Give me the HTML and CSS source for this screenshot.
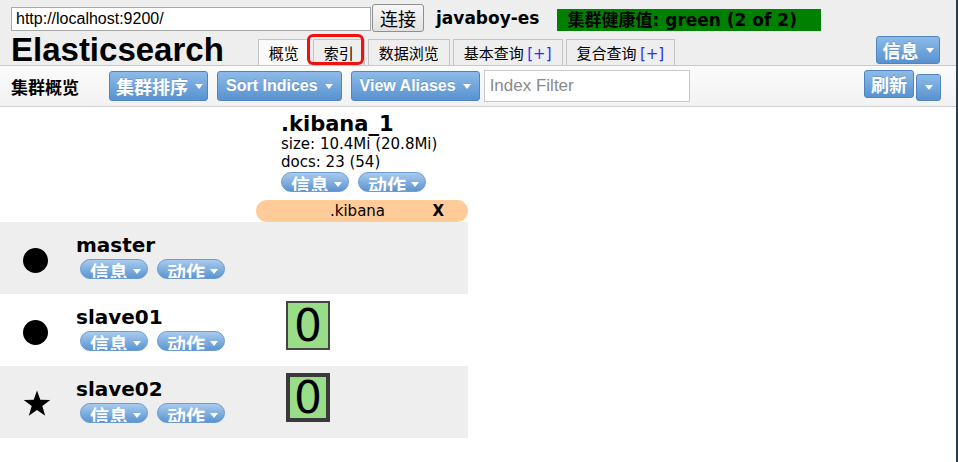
FILE: index.html
```html
<!DOCTYPE html>
<html lang="zh">
<head>
<meta charset="utf-8">
<title>Elasticsearch Head</title>
<link rel="stylesheet" href="styles.css">
</head>
<body>
<div class="page">
  <header class="head">
    <div class="conn">
      <input class="url" type="text" value="http://localhost:9200/">
      <button class="connect">连接</button>
      <span class="cluster-name">javaboy-es</span>
      <span class="health">集群健康值: green (2 of 2)</span>
    </div>
    <div class="nav">
      <h1 class="brand">Elasticsearch</h1>
      <ul class="tabs">
        <li class="tab active">概览</li>
        <li class="tab marked">索引</li>
        <li class="tab">数据浏览</li>
        <li class="tab">基本查询 <span class="plus">[+]</span></li>
        <li class="tab">复合查询 <span class="plus">[+]</span></li>
      </ul>
      <button class="btn btn-info">信息<span class="caret"></span></button>
    </div>
  </header>

  <div class="toolbar">
    <span class="tb-title">集群概览</span>
    <button class="btn btn-tb btn-cjk">集群排序<span class="caret"></span></button>
    <button class="btn btn-tb">Sort Indices<span class="caret"></span></button>
    <button class="btn btn-tb">View Aliases<span class="caret"></span></button>
    <input class="filter" type="text" placeholder="Index Filter">
    <div class="refresh">
      <button class="btn btn-refresh">刷新</button>
      <button class="btn btn-drop"><span class="caret"></span></button>
    </div>
  </div>

  <div class="cluster">
    <div class="row head-row">
      <div class="cell"></div>
      <div class="cell index">
        <div class="index-name">.kibana_1</div>
        <div class="index-meta">size: 10.4Mi (20.8Mi)</div>
        <div class="index-meta">docs: 23 (54)</div>
        <div class="pills">
          <span class="pill">信息<span class="caret"></span></span>
          <span class="pill">动作<span class="caret"></span></span>
        </div>
      </div>
    </div>
    <div class="row alias-row">
      <div class="cell"></div>
      <div class="cell alias"><span class="alias-name">.kibana</span><span class="alias-x">X</span></div>
    </div>

    <div class="row node shade">
      <div class="cell node-cell">
        <span class="node-icon dot"></span>
        <div class="node-info">
          <div class="node-name">master</div>
          <div class="pills">
            <span class="pill">信息<span class="caret"></span></span>
            <span class="pill">动作<span class="caret"></span></span>
          </div>
        </div>
      </div>
      <div class="cell shards"></div>
    </div>

    <div class="row node">
      <div class="cell node-cell">
        <span class="node-icon dot"></span>
        <div class="node-info">
          <div class="node-name">slave01</div>
          <div class="pills">
            <span class="pill">信息<span class="caret"></span></span>
            <span class="pill">动作<span class="caret"></span></span>
          </div>
        </div>
      </div>
      <div class="cell shards"><span class="shard">0</span></div>
    </div>

    <div class="row node shade">
      <div class="cell node-cell">
        <svg class="node-icon star" viewBox="0 0 28 27" width="28" height="27"><polygon points="14,0.5 17.3,9.8 27.3,10 19.3,16.1 22.2,25.8 14,20.1 5.8,25.8 8.7,16.1 0.7,10 10.7,9.8" fill="#000"/></svg>
        <div class="node-info">
          <div class="node-name">slave02</div>
          <div class="pills">
            <span class="pill">信息<span class="caret"></span></span>
            <span class="pill">动作<span class="caret"></span></span>
          </div>
        </div>
      </div>
      <div class="cell shards"><span class="shard primary">0</span></div>
    </div>
  </div>
</div>
</body>
</html>
```

FILE: styles.css
```css
html, body {
  margin: 0;
  padding: 0;
  background: #fff;
}

.page {
  width: 956px;
  height: 462px;
  border-right: 2px solid #243f52;
  background: #fff;
  font-family: "DejaVu Sans", "Noto Sans CJK SC", sans-serif;
  color: #000;
  overflow: hidden;
}

/* ---------- header ---------- */
.head {
  background: #eeeeee;
  padding: 4px 0 0 11px;
  border-bottom: 1px solid #c8c8c8;
}

.conn {
  display: flex;
  align-items: center;
  height: 28px;
}

.url {
  box-sizing: border-box;
  width: 360px;
  height: 24px;
  margin: 2px 0 0 0;
  padding: 0 4px;
  border: 1px solid #a9a9a9;
  background: #fff;
  font: 16px "Liberation Sans", "Noto Sans CJK SC", sans-serif;
  color: #000;
}

.connect {
  box-sizing: border-box;
  width: 52px;
  height: 28px;
  margin-left: 1px;
  padding: 0;
  border: 1px solid #8f8f8f;
  border-radius: 3px;
  background: linear-gradient(#f7f7f7, #e2e2e2);
  font: 18px "Noto Sans CJK SC", sans-serif;
  color: #000;
}

.cluster-name {
  margin-left: 12px;
  font: bold 17px "DejaVu Sans", sans-serif;
}

.health {
  box-sizing: border-box;
  width: 264px;
  height: 22px;
  margin: 3px 0 0 17px;
  padding-left: 11px;
  background: #008000;
  font: bold 17px/22px "DejaVu Sans", "Noto Sans CJK SC", sans-serif;
  color: #000;
}

.nav {
  display: flex;
  align-items: flex-end;
  height: 33px;
}

.brand {
  margin: 0;
  font: bold 33px/30px "Liberation Sans", sans-serif;
  color: #000;
}

.tabs {
  display: flex;
  margin: 0 0 0 34px;
  padding: 0;
  list-style: none;
}

.tab {
  position: relative;
  height: 25px;
  margin-right: 3px;
  padding: 0 10px;
  border: 1px solid #c4c4c4;
  border-bottom: none;
  background: #eeeeee;
  font: 15px/25px "Noto Sans CJK SC", sans-serif;
  color: #000;
  white-space: nowrap;
}

.tab.active {
  background: #fafafa;
}

.tab.marked::after {
  content: "";
  position: absolute;
  left: -7px;
  top: -6px;
  width: 51px;
  height: 25px;
  border: 3px solid #f01010;
  border-radius: 6px;
}

.plus {
  color: #2f2ff0;
  font-family: "DejaVu Sans", sans-serif;
}

/* ---------- buttons ---------- */
.btn {
  display: inline-flex;
  align-items: center;
  justify-content: center;
  box-sizing: border-box;
  padding: 0;
  border: 1px solid #4f83c2;
  border-radius: 3px;
  background: linear-gradient(#8dbbe8, #5892d0);
  color: #fff;
  font: bold 17px "Liberation Sans", "Noto Sans CJK SC", sans-serif;
  text-shadow: 0 -1px 0 rgba(0, 0, 0, 0.15);
}

.caret {
  display: inline-block;
  width: 0;
  height: 0;
  margin-left: 7px;
  border-left: 4px solid transparent;
  border-right: 4px solid transparent;
  border-top: 5px solid #fff;
}

.btn-info {
  align-self: flex-start;
  width: 64px;
  height: 28px;
  margin: 4px 16px 0 auto;
  font-size: 18px;
}

/* ---------- toolbar ---------- */
.toolbar {
  display: flex;
  align-items: center;
  height: 40px;
  padding-left: 11px;
  border-bottom: 1px solid #cfcfcf;
  background: linear-gradient(#fbfbfb, #f2f2f2);
}

.tb-title {
  margin-right: 30px;
  font: bold 17px "Noto Sans CJK SC", sans-serif;
}

.btn-tb {
  height: 30px;
  margin-right: 9px;
  padding: 0 8px;
  font-size: 16px;
}

.btn-tb.btn-cjk {
  padding: 0 4px 0 6px;
  font-size: 18px;
}

.filter {
  box-sizing: border-box;
  width: 206px;
  height: 32px;
  margin-left: -5px;
  padding: 0 5px;
  border: 1px solid #c9c9c9;
  background: #fff;
  font: 17px "Liberation Sans", sans-serif;
}

.filter::placeholder {
  color: #8a8a8a;
}

.refresh {
  display: flex;
  align-items: center;
  margin: 0 15px 0 auto;
}

.btn-refresh {
  width: 50px;
  height: 28px;
  margin-top: -4px;
  font-size: 18px;
}

.btn-drop {
  width: 25px;
  height: 27px;
  margin: 3px 0 0 2px;
}

.btn-drop .caret {
  margin-left: 0;
}

/* ---------- cluster overview ---------- */
.cluster {
  width: 468px;
}

.row {
  display: grid;
  grid-template-columns: 256px 212px;
}

.index {
  padding: 5px 0 8px 25px;
}

.index-name {
  font: bold 21px/24px "DejaVu Sans", sans-serif;
}

.index-meta {
  font: 15px/17.5px "DejaVu Sans", sans-serif;
}

.pills {
  display: flex;
  gap: 9px;
  margin-top: 1px;
}

.pill {
  display: inline-flex;
  align-items: flex-start;
  box-sizing: border-box;
  width: 68px;
  height: 20px;
  padding: 1px 0 0 9px;
  overflow: hidden;
  border: 1px solid #6b9bd3;
  border-radius: 10px;
  background: linear-gradient(#a9cbee, #5c94d1);
  color: #fff;
  font: bold 19px/21px "Noto Sans CJK SC", sans-serif;
}

.pill .caret {
  margin: 8px 0 0 5px;
}

.alias-row {
  height: 22px;
}

.alias {
  display: flex;
  align-items: center;
  padding: 0 24px 0 74px;
  border-radius: 11px;
  background: #ffcc99;
  font: 15px "DejaVu Sans", sans-serif;
}

.alias-x {
  margin-left: auto;
  font-weight: bold;
}

.node {
  height: 72px;
}

.shade {
  background: #eeeeee;
}

.node-cell {
  display: flex;
  align-items: flex-start;
  padding-left: 23px;
}

.node-icon.dot {
  width: 25px;
  height: 25px;
  margin-top: 26px;
  border-radius: 50%;
  background: #000;
}

.node-icon.star {
  margin-top: 24px;
}

.node-info {
  margin-left: 28px;
  padding-top: 12px;
}

.star + .node-info {
  margin-left: 25px;
}

.node-name {
  font: bold 20px/22px "DejaVu Sans", sans-serif;
}

.node .pills {
  margin: 3px 0 0 4px;
}

.shards {
  padding: 7px 0 0 30px;
}

.shard {
  display: flex;
  align-items: center;
  justify-content: center;
  box-sizing: border-box;
  width: 44px;
  height: 49px;
  border: 2px solid #444;
  background: #99dd88;
  font: 44px/1 "DejaVu Sans", sans-serif;
  color: #000;
}

.shard.primary {
  border: 4px solid #3a3a3a;
}
```
